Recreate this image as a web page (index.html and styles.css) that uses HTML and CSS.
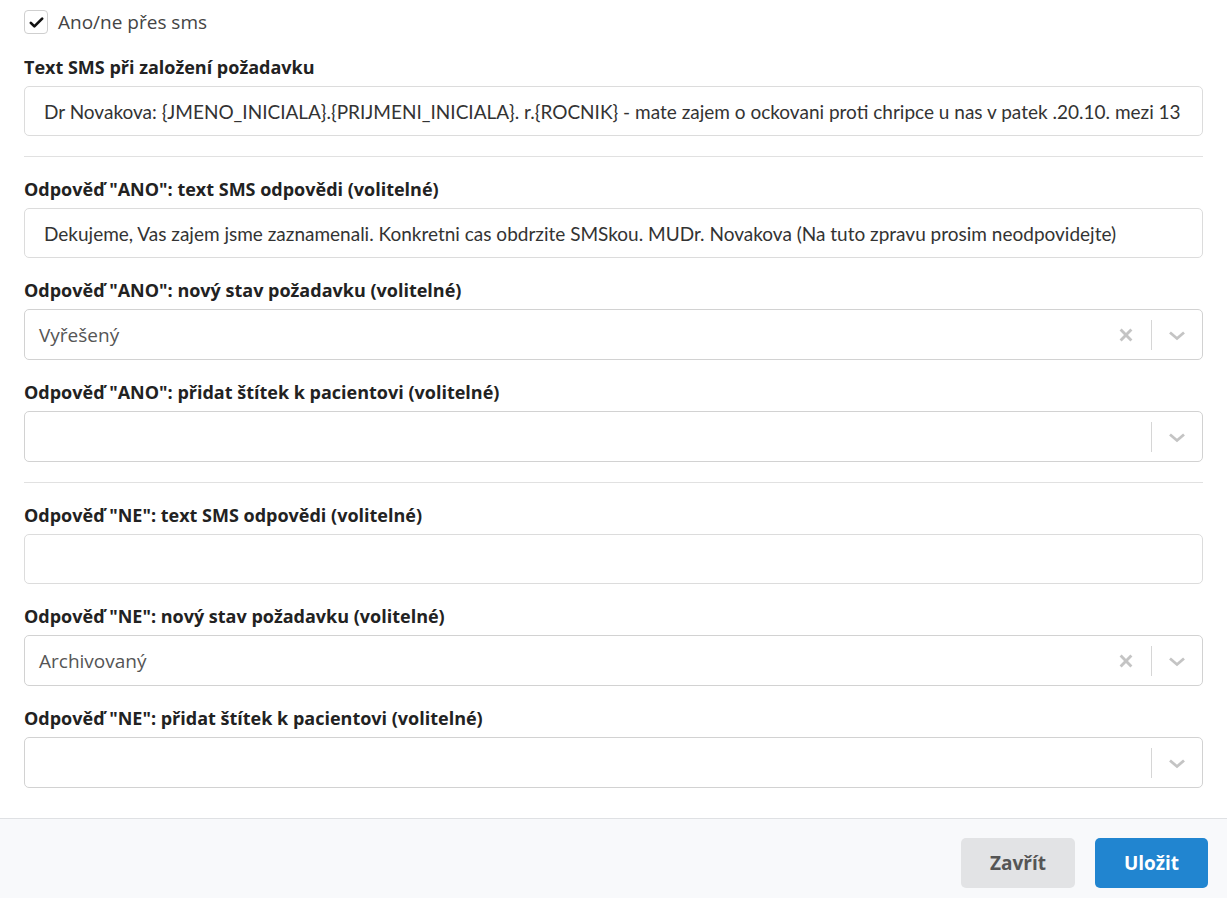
FILE: index.html
```html
<!DOCTYPE html>
<html lang="cs">
<head>
<meta charset="utf-8">
<link rel="stylesheet" href="styles.css">
</head>
<body>
<div class="modal">
  <div class="body">
    <label class="check">
      <span class="box"><svg viewBox="0 0 24 24" width="17" height="17"><path d="M4 12.5l5 5L20 6.5" fill="none" stroke="#111" stroke-width="3.8" stroke-linecap="round" stroke-linejoin="round"/></svg></span>
      <span class="check-text">Ano/ne přes sms</span>
    </label>

    <div class="field">
      <div class="label">Text SMS při založení požadavku</div>
      <div class="input"><span>Dr Novakova: {JMENO_INICIALA}.{PRIJMENI_INICIALA}. r.{ROCNIK} - mate zajem o ockovani proti chripce u nas v patek .20.10. mezi 13</span></div>
    </div>

    <hr class="divider">

    <div class="field">
      <div class="label">Odpověď "ANO": text SMS odpovědi (volitelné)</div>
      <div class="input"><span>Dekujeme, Vas zajem jsme zaznamenali. Konkretni cas obdrzite SMSkou. MUDr. Novakova (Na tuto zpravu prosim neodpovidejte)</span></div>
    </div>

    <div class="field">
      <div class="label">Odpověď "ANO": nový stav požadavku (volitelné)</div>
      <div class="select">
        <span class="value">Vyřešený</span>
        <span class="clear"><svg viewBox="0 0 20 20" width="18" height="18"><path d="M4 4L16 16M16 4L4 16" stroke="#c4c4c4" stroke-width="3.2"/></svg></span>
        <span class="sep"></span>
        <span class="arrow"><svg viewBox="0 0 20 20" width="20" height="20"><path d="M3 7.5l7 6 7-6" fill="none" stroke="#c4c4c4" stroke-width="2.8"/></svg></span>
      </div>
    </div>

    <div class="field">
      <div class="label">Odpověď "ANO": přidat štítek k pacientovi (volitelné)</div>
      <div class="select">
        <span class="value"></span>
        <span class="sep"></span>
        <span class="arrow"><svg viewBox="0 0 20 20" width="20" height="20"><path d="M3 7.5l7 6 7-6" fill="none" stroke="#c4c4c4" stroke-width="2.8"/></svg></span>
      </div>
    </div>

    <hr class="divider">

    <div class="field">
      <div class="label">Odpověď "NE": text SMS odpovědi (volitelné)</div>
      <div class="input"><span></span></div>
    </div>

    <div class="field">
      <div class="label">Odpověď "NE": nový stav požadavku (volitelné)</div>
      <div class="select">
        <span class="value">Archivovaný</span>
        <span class="clear"><svg viewBox="0 0 20 20" width="18" height="18"><path d="M4 4L16 16M16 4L4 16" stroke="#c4c4c4" stroke-width="3.2"/></svg></span>
        <span class="sep"></span>
        <span class="arrow"><svg viewBox="0 0 20 20" width="20" height="20"><path d="M3 7.5l7 6 7-6" fill="none" stroke="#c4c4c4" stroke-width="2.8"/></svg></span>
      </div>
    </div>

    <div class="field">
      <div class="label">Odpověď "NE": přidat štítek k pacientovi (volitelné)</div>
      <div class="select">
        <span class="value"></span>
        <span class="sep"></span>
        <span class="arrow"><svg viewBox="0 0 20 20" width="20" height="20"><path d="M3 7.5l7 6 7-6" fill="none" stroke="#c4c4c4" stroke-width="2.8"/></svg></span>
      </div>
    </div>
  </div>
  <div class="footer">
    <button class="btn btn-close">Zavřít</button>
    <button class="btn btn-save">Uložit</button>
  </div>
</div>
</body>
</html>
```
FILE: styles.css
```css
* { box-sizing: border-box; }
html, body { margin: 0; padding: 0; background: #fff; }
body { font-family: "Open Sans", "Liberation Sans", sans-serif; color: #222; }
.modal { width: 1227px; height: 898px; display: flex; flex-direction: column; overflow: hidden; }
.body { padding: 10px 24px 0 24px; flex: 1; }
.check { display: flex; align-items: center; gap: 10px; height: 24px; margin-bottom: 21px; }
.box { width: 24px; height: 24px; border: 1px solid #cfcfcf; border-radius: 4px; display: flex; align-items: center; justify-content: center; background: #fff; }
.check-text { font-size: 19px; color: #444; line-height: 24px; }
.field { margin-bottom: 20px; }
.label { font-size: 18px; font-weight: 700; line-height: 25px; margin-bottom: 6px; color: #222; }
.input { height: 50px; border: 1px solid #dcdcdc; border-radius: 5px; padding: 0 19px; display: flex; align-items: center; overflow: hidden; white-space: nowrap; }
.input span { font-family: Lato, "Open Sans", sans-serif; font-size: 19px; color: #333; }
.divider { border: 0; border-top: 1px solid #e1e1e1; margin: 0 0 20px 0; height: 0; }
.select { height: 51px; border: 1px solid #d2d2d2; border-radius: 5px; display: flex; align-items: center; padding-left: 14px; }
.select .value { flex: 1; font-size: 19px; color: #555; }
.clear { width: 24px; display: flex; justify-content: center; margin-right: 13px; }
.sep { width: 1px; height: 30px; background: #d6d6d6; }
.arrow { width: 50px; display: flex; justify-content: center; }
.footer { height: 80px; flex: none; border-top: 1px solid #dfe1e4; background: #f8f9fb; display: flex; justify-content: flex-end; align-items: flex-start; gap: 20px; padding: 19px 19px 0 0; }
.btn { height: 50px; border: 0; border-radius: 5px; font-family: "Open Sans", sans-serif; font-weight: 700; font-size: 19px; padding: 0; }
.btn-close { width: 114px; background: #e2e3e5; color: #555; }
.btn-save { width: 113px; background: #2185d0; color: #fff; }
```
